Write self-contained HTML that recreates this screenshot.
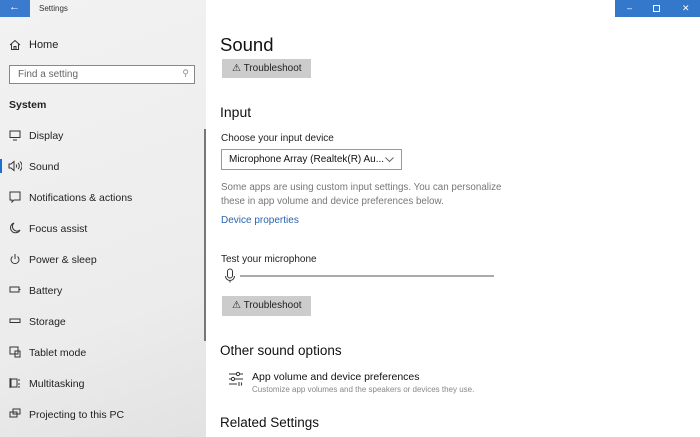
<!DOCTYPE html>
<html><head><style>
*{margin:0;padding:0;box-sizing:border-box}
body{width:700px;height:437px;overflow:hidden;background:#fff;font-family:"Liberation Sans",sans-serif;position:relative;color:#000}
.side{position:absolute;left:0;top:0;width:206px;height:437px;background:linear-gradient(160deg,#f2f2f2 0%,#ececec 70%,#e2e2e2 100%)}
.a{position:absolute;white-space:nowrap}
.nav{font-size:10.5px;color:#222;left:29px}
.btn{position:absolute;background:#ccc;font-size:10px;color:#222;padding-left:10px;line-height:19px;width:89px;height:19px}
</style></head><body>
<div class="side"></div>
<div class="a" style="left:0;top:0;width:30px;height:17px;background:#3a7bd0;color:#fff;font-size:11px;line-height:15px;padding-left:9px">←</div>
<div class="a" style="left:39px;top:4px;font-size:8px;color:#333">Settings</div>
<div class="a" style="left:615px;top:0;width:85px;height:17px;background:#3478cc;color:#fff;font-size:9px;line-height:16px">
<span style="position:absolute;left:12px">–</span><span style="position:absolute;left:38px;top:5px;width:7px;height:7px;border:1px solid #fff"></span><span style="position:absolute;left:67px">✕</span></div>
<svg class="a" style="left:9px;top:39px" width="12" height="12" viewBox="0 0 12 12" fill="none" stroke="#333" stroke-width="1"><path d="M1 6L6 1.5L11 6M2.5 5v5.5h7V5M5 10.5V7.5h2v3"/></svg>
<div class="a nav" style="top:39px;font-size:11px">Home</div>
<div class="a" style="left:9px;top:65px;width:186px;height:19px;border:1px solid #888;background:#fff;font-size:10px;color:#666;padding:3px 8px">Find a setting<span style="position:absolute;right:5px;top:2px;font-size:9px;color:#888">⚲</span></div>
<div class="a" style="left:9px;top:99px;font-size:10.5px;font-weight:bold;color:#222">System</div>
<div class="a" style="left:204px;top:129px;width:1.5px;height:212px;background:#777"></div>
<div class="a" style="left:0;top:159px;width:2px;height:14px;background:#1a6fd0"></div>
<svg class="a" style="left:9px;top:130px" width="12" height="11" fill="none" stroke="#333"><rect x="1" y="1" width="10" height="6.5"/><path d="M4 10h4"/></svg>
<div class="a nav" style="top:130px">Display</div>
<svg class="a" style="left:8px;top:160px" width="14" height="12" fill="none" stroke="#333"><path d="M1 4h2l3-2.5v9L3 8H1z"/><path d="M8 4.5a2 2 0 0 1 0 3M10 3a4 4 0 0 1 0 6M12 1.5a6 6 0 0 1 0 9"/></svg>
<div class="a nav" style="top:161px">Sound</div>
<svg class="a" style="left:9px;top:191px" width="12" height="12" fill="none" stroke="#333"><path d="M1 1h10v8H5l-2 2V9H1z"/></svg>
<div class="a nav" style="top:192px">Notifications &amp; actions</div>
<svg class="a" style="left:9px;top:222px" width="12" height="12" fill="none" stroke="#333"><path d="M5 1A5 5 0 1 0 11 8A4 4 0 0 1 5 1z"/></svg>
<div class="a nav" style="top:223px">Focus assist</div>
<svg class="a" style="left:9px;top:253px" width="12" height="12" fill="none" stroke="#333"><path d="M3.5 3.5A4 4 0 1 0 8.5 3.5M6 1v5"/></svg>
<div class="a nav" style="top:254px">Power &amp; sleep</div>
<svg class="a" style="left:9px;top:286px" width="12" height="8" fill="none" stroke="#333"><rect x="1" y="1" width="9" height="5"/><path d="M11 3v1"/></svg>
<div class="a nav" style="top:285px">Battery</div>
<svg class="a" style="left:9px;top:317px" width="12" height="8" fill="none" stroke="#333"><rect x="1" y="2" width="10" height="3.5"/></svg>
<div class="a nav" style="top:316px">Storage</div>
<svg class="a" style="left:9px;top:346px" width="12" height="12" fill="none" stroke="#333"><rect x="1" y="1" width="8" height="7"/><rect x="6" y="5" width="5" height="6"/></svg>
<div class="a nav" style="top:347px">Tablet mode</div>
<svg class="a" style="left:9px;top:377px" width="12" height="12" fill="none" stroke="#333"><rect x="2" y="2" width="6" height="8"/><path d="M1 1v10M10 2v2M10 6v2M10 9v2"/></svg>
<div class="a nav" style="top:378px">Multitasking</div>
<svg class="a" style="left:9px;top:408px" width="12" height="12" fill="none" stroke="#333"><rect x="4" y="1" width="7" height="5"/><rect x="1" y="4" width="7" height="5"/></svg>
<div class="a nav" style="top:409px">Projecting to this PC</div>

<div class="a" style="left:220px;top:34px;font-size:18.5px;color:#111">Sound</div>
<div class="btn" style="left:222px;top:59px">⚠ Troubleshoot</div>
<div class="a" style="left:220px;top:104px;font-size:14px;color:#111">Input</div>
<div class="a" style="left:221px;top:133px;font-size:10px;color:#222">Choose your input device</div>
<div class="a" style="left:221px;top:149px;width:181px;height:21px;border:1px solid #999;font-size:10px;color:#111;padding:4px 7px">Microphone Array (Realtek(R) Au...<svg style="position:absolute;right:7px;top:7px" width="9" height="6" fill="none" stroke="#666"><path d="M0.5 0.5L4.5 4.5L8.5 0.5"/></svg></div>
<div class="a" style="left:221px;top:181px;font-size:9.8px;color:#777;line-height:13.5px">Some apps are using custom input settings. You can personalize<br>these in app volume and device preferences below.</div>
<div class="a" style="left:221px;top:215px;font-size:10px;color:#2a64b0">Device properties</div>
<div class="a" style="left:221px;top:254px;font-size:10px;color:#222">Test your microphone</div>
<svg class="a" style="left:224px;top:268px" width="12" height="16" fill="none" stroke="#333"><rect x="3.5" y="1" width="5" height="9" rx="2.5"/><path d="M1.5 8a4.5 4.5 0 0 0 9 0M6 12.5v2"/></svg>
<div class="a" style="left:240px;top:275px;width:254px;height:2px;background:#aaa"></div>
<div class="btn" style="left:222px;top:296px;height:20px;line-height:20px">⚠ Troubleshoot</div>
<div class="a" style="left:220px;top:343px;font-size:13.5px;color:#111">Other sound options</div>
<svg class="a" style="left:228px;top:371px" width="16" height="16" fill="none" stroke="#333"><path d="M1 3h14M1 8h14M1 13h8"/><circle cx="10" cy="3" r="1.6" fill="#fff"/><circle cx="5" cy="8" r="1.6" fill="#fff"/><path d="M11 11v4M13 11.5a2 2 0 0 1 0 3"/></svg>
<div class="a" style="left:252px;top:371px;font-size:10.5px;color:#111">App volume and device preferences</div>
<div class="a" style="left:252px;top:385px;font-size:8px;color:#888">Customize app volumes and the speakers or devices they use.</div>
<div class="a" style="left:220px;top:415px;font-size:13.5px;color:#111">Related Settings</div>
</body></html>
